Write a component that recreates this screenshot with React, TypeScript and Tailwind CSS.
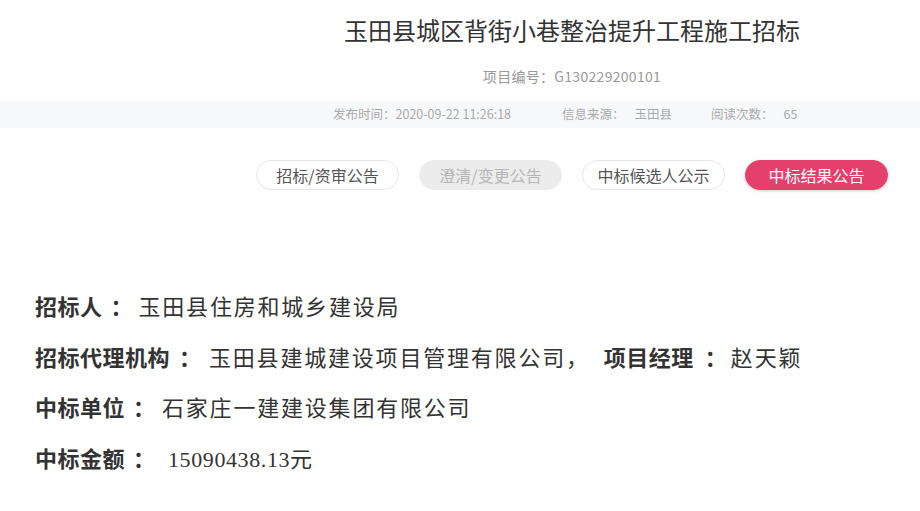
export default function App() {
  const tabs = [
    { label: '招标/资审公告', cls: 'bg-white border border-[#e6e6e6] text-[#555]' },
    { label: '澄清/变更公告', cls: 'bg-[#ececec] border border-[#ececec] text-[#b5b5b5]' },
    { label: '中标候选人公示', cls: 'bg-white border border-[#e6e6e6] text-[#555]' },
    { label: '中标结果公告', cls: 'bg-[#e3406b] border border-[#e3406b] text-white shadow-[0_1px_3px_rgba(227,64,107,0.35)]' },
  ];

  const label = 'font-bold tracking-[0.5px]';
  const colon = 'inline-block w-[22px] text-center font-bold';
  const value = 'tracking-[1.8px]';

  return (
    <div className="w-[920px] h-[511px] overflow-hidden bg-white font-['Noto_Sans_CJK_SC',sans-serif]">
      <div className="pl-[224px] pt-[13px] text-center">
        <h1 className="text-[24px] leading-[34px] text-[#333] font-normal">玉田县城区背街小巷整治提升工程施工招标</h1>
        <p className="mt-[19px] text-[14px] leading-[20px] tracking-[0.3px] text-[#999]">项目编号：G130229200101</p>
      </div>

      <div className="mt-[15px] h-[27px] bg-[#f7f8fa] flex items-center pl-[333px] text-[12.5px] text-[#aaa]">
        <span>发布时间：2020-09-22 11:26:18</span>
        <span className="ml-[51px]">信息来源：</span>
        <span className="ml-[10px]">玉田县</span>
        <span className="ml-[39px]">阅读次数：</span>
        <span className="ml-[10px]">65</span>
      </div>

      <div className="mt-[32px] flex justify-end gap-[20px] pr-[32px]">
        {tabs.map((t) => (
          <div
            key={t.label}
            className={`w-[143px] h-[30px] rounded-full flex items-center justify-center text-[16px] ${t.cls}`}
          >
            {t.label}
          </div>
        ))}
      </div>

      <div className="mt-[93px] pl-[35px] text-[22px] leading-[50.5px] text-[#333] whitespace-nowrap font-['Liberation_Serif','Noto_Sans_CJK_SC',serif]">
        <p>
          <span className={label}>招标人</span>
          <span className={`${colon} ml-[8px]`}>：</span>
          <span className={`${value} ml-[6px]`}>玉田县住房和城乡建设局</span>
        </p>
        <p>
          <span className={label}>招标代理机构</span>
          <span className={`${colon} ml-[9px]`}>：</span>
          <span className={`${value} ml-[8px]`}>玉田县建城建设项目管理有限公司，</span>
          <span className={`${label} ml-[14px]`}>项目经理</span>
          <span className={`${colon} ml-[11px]`}>：</span>
          <span className={`${value} ml-[4px]`}>赵天颖</span>
        </p>
        <p>
          <span className={label}>中标单位</span>
          <span className={`${colon} ml-[8px]`}>：</span>
          <span className={`${value} ml-[7px]`}>石家庄一建建设集团有限公司</span>
        </p>
        <p>
          <span className={label}>中标金额</span>
          <span className={`${colon} ml-[8px]`}>：</span>
          <span className="ml-[13px] tracking-[0.6px]">15090438.13元</span>
        </p>
      </div>
    </div>
  );
}
